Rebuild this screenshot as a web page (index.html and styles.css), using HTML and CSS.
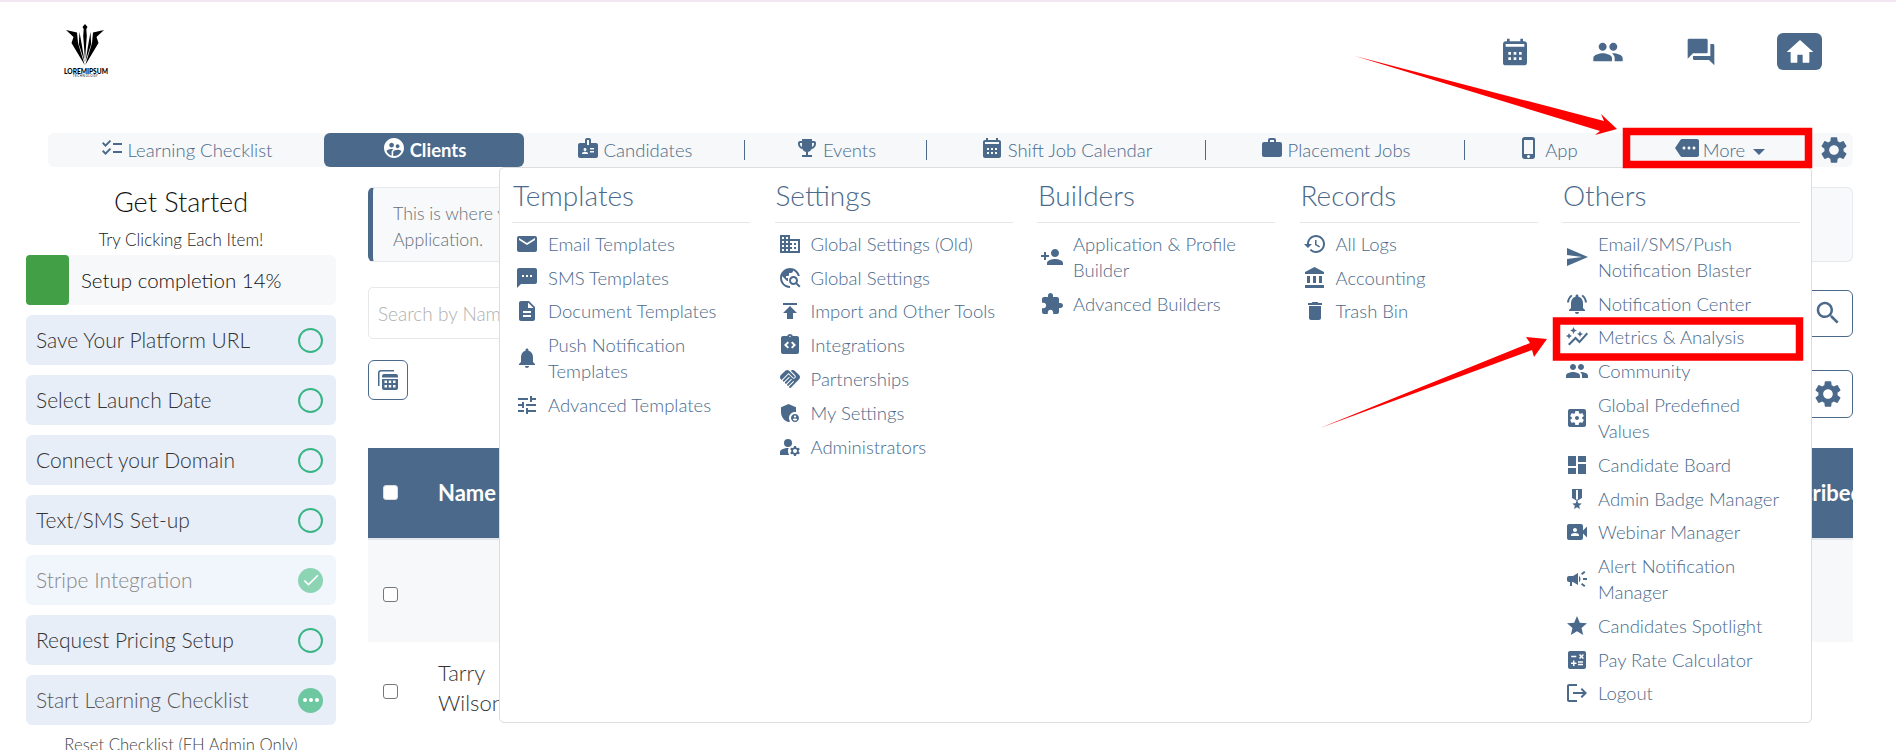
FILE: index.html
```html
<!DOCTYPE html>
<html lang="en">
<head>
  <meta charset="UTF-8" />
  <meta name="viewport" content="width=device-width, initial-scale=1.0"/>
  <title>Clients</title>
  <link rel="stylesheet" href="styles.css">
</head>
<body>
  <!-- icon sprite -->
  <svg class="sprite" xmlns="http://www.w3.org/2000/svg">
    <symbol id="i-checklist" viewBox="0 0 24 24"><path d="M22 7h-9v2h9V7zm0 8h-9v2h9v-2zM5.54 11 2 7.46l1.41-1.41 2.12 2.12 4.24-4.24 1.41 1.41L5.54 11zm0 8L2 15.46l1.41-1.41 2.12 2.12 4.24-4.24 1.41 1.41L5.54 19z"/></symbol>
    <symbol id="i-clients" viewBox="0 0 24 24"><path d="M11.99 2c-5.52 0-10 4.48-10 10s4.48 10 10 10 10-4.48 10-10-4.48-10-10-10zm3.61 6.34c1.07 0 1.93.86 1.93 1.93 0 1.07-.86 1.93-1.93 1.93-1.07 0-1.93-.86-1.93-1.93-.01-1.07.86-1.93 1.93-1.93zm-6-1.58c1.3 0 2.36 1.06 2.36 2.36 0 1.3-1.06 2.36-2.36 2.36s-2.36-1.06-2.36-2.36c0-1.31 1.05-2.36 2.36-2.36zm0 9.13v3.75c-2.4-.75-4.3-2.6-5.14-4.96 1.05-1.12 3.67-1.69 5.14-1.69.53 0 1.2.08 1.9.22-1.64.87-1.9 2.02-1.9 2.68zM11.99 20c-.27 0-.53-.01-.79-.04v-4.07c0-1.42 2.94-2.13 4.4-2.13 1.07 0 2.92.39 3.84 1.15-1.17 2.97-4.06 5.09-7.45 5.09z"/></symbol>
    <symbol id="i-badge" viewBox="0 0 24 24"><path d="M20 7h-5V4c0-1.1-.9-2-2-2h-2c-1.1 0-2 .9-2 2v3H4c-1.1 0-2 .9-2 2v11c0 1.1.9 2 2 2h16c1.1 0 2-.9 2-2V9c0-1.1-.9-2-2-2zM9 12c.83 0 1.5.67 1.5 1.5S9.83 15 9 15s-1.5-.67-1.5-1.5S8.17 12 9 12zm3 6H6v-.75c0-1 2-1.5 3-1.5s3 .5 3 1.5V18zm1-9h-2V4h2v5zm5 7.5h-4V15h4v1.5zm0-3h-4V12h4v1.5z"/></symbol>
    <symbol id="i-trophy" viewBox="0 0 24 24"><path d="M19 5h-2V3H7v2H5c-1.1 0-2 .9-2 2v1c0 2.55 1.92 4.63 4.39 4.94.63 1.5 1.98 2.63 3.61 2.96V19H7v2h10v-2h-4v-3.1c1.63-.33 2.98-1.46 3.61-2.96C19.08 12.63 21 10.55 21 8V7c0-1.1-.9-2-2-2zM5 8V7h2v3.82C5.84 10.4 5 9.3 5 8zm14 0c0 1.3-.84 2.4-2 2.82V7h2v1z"/></symbol>
    <symbol id="i-calendar" viewBox="0 0 24 24"><path d="M19 4h-1V2h-2v2H8V2H6v2H5c-1.11 0-1.99.9-1.99 2L3 20a2 2 0 0 0 2 2h14c1.1 0 2-.9 2-2V6c0-1.1-.9-2-2-2zM9 18H7v-2h2v2zm0-4H7v-2h2v2zm4 4h-2v-2h2v2zm0-4h-2v-2h2v2zm4 4h-2v-2h2v2zm0-4h-2v-2h2v2zm2-6H5V6h14v2z"/></symbol>
    <symbol id="i-work" viewBox="0 0 24 24"><path d="M20 6h-4V4c0-1.11-.89-2-2-2h-4c-1.11 0-2 .89-2 2v2H4c-1.11 0-1.99.89-1.99 2L2 19c0 1.11.89 2 2 2h16c1.11 0 2-.89 2-2V8c0-1.11-.89-2-2-2zm-6 0h-4V4h4v2z"/></symbol>
    <symbol id="i-phone" viewBox="0 0 24 24"><path d="M15.5 1h-8C6.12 1 5 2.12 5 3.5v17C5 21.88 6.12 23 7.5 23h8c1.38 0 2.5-1.12 2.5-2.5v-17C18 2.12 16.88 1 15.5 1zm-4 21c-.83 0-1.5-.67-1.5-1.5s.67-1.5 1.5-1.5 1.5.67 1.5 1.5-.67 1.5-1.5 1.5zm4.5-4H7V4h9v14z"/></symbol>
    <symbol id="i-more" viewBox="0 0 24 24"><path d="M22 3H7c-.69 0-1.23.35-1.59.88L0 12l5.41 8.11c.36.53.9.89 1.59.89h15c1.1 0 2-.9 2-2V5c0-1.1-.9-2-2-2zM9 13.5c-.83 0-1.5-.67-1.5-1.5s.67-1.5 1.5-1.5 1.5.67 1.5 1.5-.67 1.5-1.5 1.5zm5 0c-.83 0-1.5-.67-1.5-1.5s.67-1.5 1.5-1.5 1.5.67 1.5 1.5-.67 1.5-1.5 1.5zm5 0c-.83 0-1.5-.67-1.5-1.5s.67-1.5 1.5-1.5 1.5.67 1.5 1.5-.67 1.5-1.5 1.5z"/></symbol>
    <symbol id="i-gear" viewBox="0 0 24 24"><path d="M19.14 12.94c.04-.3.06-.61.06-.94 0-.32-.02-.64-.07-.94l2.03-1.58c.18-.14.23-.41.12-.61l-1.92-3.32c-.12-.22-.37-.29-.59-.22l-2.39.96c-.5-.38-1.03-.7-1.62-.94l-.36-2.54c-.04-.24-.24-.41-.48-.41h-3.84c-.24 0-.43.17-.47.41l-.36 2.54c-.59.24-1.13.57-1.62.94l-2.39-.96c-.22-.08-.47 0-.59.22L2.74 8.87c-.12.21-.08.47.12.61l2.03 1.58c-.05.3-.09.63-.09.94s.02.64.07.94l-2.03 1.58c-.18.14-.23.41-.12.61l1.92 3.32c.12.22.37.29.59.22l2.39-.96c.5.38 1.03.7 1.62.94l.36 2.54c.05.24.24.41.48.41h3.84c.24 0 .44-.17.47-.41l.36-2.54c.59-.24 1.13-.56 1.62-.94l2.39.96c.22.08.47 0 .59-.22l1.92-3.32c.12-.22.07-.47-.12-.61l-2.01-1.58zM12 15.6c-1.98 0-3.6-1.62-3.6-3.6s1.62-3.6 3.6-3.6 3.6 1.62 3.6 3.6-1.62 3.6-3.6 3.6z"/></symbol>
    <symbol id="i-people" viewBox="0 0 24 24"><path d="M16 11c1.66 0 2.99-1.34 2.99-3S17.66 5 16 5c-1.66 0-3 1.34-3 3s1.34 3 3 3zm-8 0c1.66 0 2.99-1.34 2.99-3S9.66 5 8 5C6.34 5 5 6.34 5 8s1.34 3 3 3zm0 2c-2.33 0-7 1.17-7 3.5V19h14v-2.5c0-2.33-4.67-3.5-7-3.5zm8 0c-.29 0-.62.02-.97.05 1.16.84 1.97 1.97 1.97 3.45V19h6v-2.5c0-2.33-4.67-3.5-7-3.5z"/></symbol>
    <symbol id="i-forum" viewBox="0 0 24 24"><path d="M21 6h-2v9H6v2c0 .55.45 1 1 1h11l4 4V7c0-.55-.45-1-1-1zm-4 6V3c0-.55-.45-1-1-1H3c-.55 0-1 .45-1 1v14l4-4h10c.55 0 1-.45 1-1z"/></symbol>
    <symbol id="i-home" viewBox="0 0 24 24"><path d="M10 20v-6h4v6h5v-8h3L12 3 2 12h3v8z"/></symbol>
    <symbol id="i-mail" viewBox="0 0 24 24"><path d="M20 4H4c-1.1 0-1.99.9-1.99 2L2 18c0 1.1.9 2 2 2h16c1.1 0 2-.9 2-2V6c0-1.1-.9-2-2-2zm0 4-8 5-8-5V6l8 5 8-5v2z"/></symbol>
    <symbol id="i-sms" viewBox="0 0 24 24"><path d="M20 2H4c-1.1 0-1.99.9-1.99 2L2 22l4-4h14c1.1 0 2-.9 2-2V4c0-1.1-.9-2-2-2zM9 11H7V9h2v2zm4 0h-2V9h2v2zm4 0h-2V9h2v2z"/></symbol>
    <symbol id="i-doc" viewBox="0 0 24 24"><path d="M14 2H6c-1.1 0-1.99.9-1.99 2L4 20c0 1.1.89 2 1.99 2H18c1.1 0 2-.9 2-2V8l-6-6zm2 16H8v-2h8v2zm0-4H8v-2h8v2zm-3-5V3.5L18.5 9H13z"/></symbol>
    <symbol id="i-bell" viewBox="0 0 24 24"><path d="M12 22c1.1 0 2-.9 2-2h-4c0 1.1.89 2 2 2zm6-6v-5c0-3.07-1.64-5.64-4.5-6.32V4c0-.83-.67-1.5-1.5-1.5s-1.5.67-1.5 1.5v.68C7.63 5.36 6 7.92 6 11v5l-2 2v1h16v-1l-2-2z"/></symbol>
    <symbol id="i-tune" viewBox="0 0 24 24"><path d="M3 17v2h6v-2H3zM3 5v2h10V5H3zm10 16v-2h8v-2h-8v-2h-2v6h2zM7 9v2H3v2h4v2h2V9H7zm14 4v-2H11v2h10zm-6-4h2V7h4V5h-4V3h-2v6z"/></symbol>
    <symbol id="i-domain" viewBox="0 0 24 24"><path d="M12 7V3H2v18h20V7H12zM6 19H4v-2h2v2zm0-4H4v-2h2v2zm0-4H4V9h2v2zm0-4H4V5h2v2zm4 12H8v-2h2v2zm0-4H8v-2h2v2zm0-4H8V9h2v2zm0-4H8V5h2v2zm10 12h-8v-2h2v-2h-2v-2h2v-2h-2V9h8v10zm-2-8h-2v2h2v-2zm0 4h-2v2h2v-2z"/></symbol>
    <symbol id="i-explore" viewBox="0 0 24 24"><path d="M19.3 16.9c.4-.7.7-1.5.7-2.4 0-2.5-2-4.5-4.5-4.5S11 12 11 14.5s2 4.5 4.5 4.5c.9 0 1.7-.3 2.4-.7l3.2 3.2 1.4-1.4-3.2-3.2zm-3.8.1c-1.4 0-2.5-1.1-2.5-2.5s1.1-2.5 2.5-2.5 2.5 1.1 2.5 2.5-1.1 2.5-2.5 2.5zM12 20v2C6.48 22 2 17.52 2 12S6.48 2 12 2c4.84 0 8.87 3.44 9.8 8h-2.07c-.64-2.46-2.4-4.47-4.73-5.41V5c0 1.1-.9 2-2 2h-2v2c0 .55-.45 1-1 1H8v2h2v3H9l-4.79-4.79C4.08 10.79 4 11.38 4 12c0 4.41 3.59 8 8 8z"/></symbol>
    <symbol id="i-publish" viewBox="0 0 24 24"><path d="M5 4v2h14V4H5zm0 10h4v6h6v-6h4l-7-7-7 7z"/></symbol>
    <symbol id="i-code" viewBox="0 0 24 24"><path d="M19 3h-4.18C14.4 1.84 13.3 1 12 1s-2.4.84-2.82 2H5c-1.1 0-2 .9-2 2v14c0 1.1.9 2 2 2h14c1.1 0 2-.9 2-2V5c0-1.1-.9-2-2-2zm-7-.25c.41 0 .75.34.75.75s-.34.75-.75.75-.75-.34-.75-.75.34-.75.75-.75zM11 14.17l-1.41 1.42L6 12l3.59-3.59L11 9.83 8.83 12 11 14.17zm3.41 1.42L13 14.17 15.17 12 13 9.83l1.41-1.42L18 12l-3.59 3.59z"/></symbol>
    <symbol id="i-handshake" viewBox="0 0 24 24"><path d="M16.48 10.41c-.39.39-1.04.39-1.43 0l-4.47-4.46-7.05 7.04-.66-.63c-1.17-1.17-1.17-3.07 0-4.24l4.24-4.24c1.17-1.17 3.07-1.17 4.24 0L16.48 9c.39.39.39 1.02 0 1.41zm.7-2.12c.78.78.78 2.05 0 2.83-1.27 1.27-2.61.22-2.83 0l-3.76-3.76-5.57 5.57c-.39.39-.39 1.02 0 1.41.39.39 1.02.39 1.42 0l4.62-4.62.71.71-4.62 4.62c-.39.39-.39 1.02 0 1.41.39.39 1.02.39 1.42 0l4.62-4.62.71.71-4.62 4.62c-.39.39-.39 1.02 0 1.41.39.39 1.02.39 1.41 0l4.62-4.62.71.71-4.62 4.62c-.39.39-.39 1.02 0 1.41.39.39 1.02.39 1.41 0l8.32-8.34c1.17-1.17 1.17-3.07 0-4.24l-4.24-4.24c-1.15-1.15-3.01-1.17-4.18-.06l4.48 4.47z"/></symbol>
    <symbol id="i-shield" viewBox="0 0 24 24"><path d="M17 11c.34 0 .67.04 1 .09V6.27L10.5 3 3 6.27v4.91c0 4.54 3.2 8.79 7.5 9.82.55-.13 1.08-.32 1.6-.55-.69-.98-1.1-2.17-1.1-3.45 0-3.31 2.69-6 6-6z"/><path d="M17 13c-2.21 0-4 1.79-4 4s1.79 4 4 4 4-1.79 4-4-1.79-4-4-4zm0 1.38c.62 0 1.12.51 1.12 1.12s-.51 1.12-1.12 1.12-1.12-.51-1.12-1.12.5-1.12 1.12-1.12zm0 5.37c-.93 0-1.74-.46-2.24-1.17.05-.72 1.51-1.08 2.24-1.08s2.19.36 2.24 1.08c-.5.71-1.31 1.17-2.24 1.17z"/></symbol>
    <symbol id="i-admin" viewBox="0 0 24 24"><circle cx="10" cy="8" r="4"/><path d="M10.67 13.02C10.45 13.01 10.23 13 10 13c-2.42 0-4.68.67-6.61 1.82-.88.52-1.39 1.5-1.39 2.53V20h9.26c-.79-1.13-1.26-2.51-1.26-4 0-1.07.25-2.07.67-2.98z"/><path d="M20.75 16c0-.22-.03-.42-.06-.63l1.14-1.01-1-1.73-1.45.49c-.32-.27-.68-.48-1.08-.63L18 11h-2l-.3 1.49c-.4.15-.76.36-1.08.63l-1.45-.49-1 1.73 1.14 1.01c-.03.21-.06.41-.06.63s.03.42.06.63l-1.14 1.01 1 1.73 1.45-.49c.32.27.68.48 1.08.63L16 21h2l.3-1.49c.4-.15.76-.36 1.08-.63l1.45.49 1-1.73-1.14-1.01c.03-.21.06-.41.06-.63zM17 18c-1.1 0-2-.9-2-2s.9-2 2-2 2 .9 2 2-.9 2-2 2z"/></symbol>
    <symbol id="i-person-add" viewBox="0 0 24 24"><path d="M15 12c2.21 0 4-1.79 4-4s-1.79-4-4-4-4 1.79-4 4 1.79 4 4 4zm-9-2V7H4v3H1v2h3v3h2v-3h3v-2H6zm9 4c-2.67 0-8 1.34-8 4v2h16v-2c0-2.66-5.33-4-8-4z"/></symbol>
    <symbol id="i-puzzle" viewBox="0 0 24 24"><path d="M20.5 11H19V7c0-1.1-.9-2-2-2h-4V3.5C13 2.12 11.88 1 10.5 1S8 2.12 8 3.5V5H4c-1.1 0-1.99.9-1.99 2v3.8H3.5c1.49 0 2.7 1.21 2.7 2.7s-1.21 2.7-2.7 2.7H2V20c0 1.1.9 2 2 2h3.8v-1.5c0-1.49 1.21-2.7 2.7-2.7 1.49 0 2.7 1.21 2.7 2.7V22H17c1.1 0 2-.9 2-2v-4h1.5c1.38 0 2.5-1.12 2.5-2.5S21.88 11 20.5 11z"/></symbol>
    <symbol id="i-history" viewBox="0 0 24 24"><path d="M13 3c-4.97 0-9 4.03-9 9H1l3.89 3.89.07.14L9 12H6c0-3.87 3.13-7 7-7s7 3.13 7 7-3.13 7-7 7c-1.93 0-3.68-.79-4.94-2.06l-1.42 1.42C8.27 19.99 10.51 21 13 21c4.97 0 9-4.03 9-9s-4.03-9-9-9zm-1 5v5l4.28 2.54.72-1.21-3.5-2.08V8H12z"/></symbol>
    <symbol id="i-bank" viewBox="0 0 24 24"><path d="M4 10v7h3v-7H4zm6 0v7h3v-7h-3zM2 22h19v-3H2v3zm14-12v7h3v-7h-3zm-4.5-9L2 6v2h19V6l-9.5-5z"/></symbol>
    <symbol id="i-trash" viewBox="0 0 24 24"><path d="M6 19c0 1.1.9 2 2 2h8c1.1 0 2-.9 2-2V7H6v12zM19 4h-3.5l-1-1h-5l-1 1H5v2h14V4z"/></symbol>
    <symbol id="i-send" viewBox="0 0 24 24"><path d="M2.01 21 23 12 2.01 3 2 10l15 2-15 2z"/></symbol>
    <symbol id="i-bell-active" viewBox="0 0 24 24"><path d="M7.58 4.08 6.15 2.65C3.75 4.48 2.17 7.3 2.03 10.5h2c.15-2.65 1.51-4.97 3.55-6.42zm12.39 6.42h2c-.15-3.2-1.73-6.02-4.12-7.85l-1.42 1.43c2.02 1.45 3.39 3.77 3.54 6.42zM18 11c0-3.07-1.64-5.64-4.5-6.32V4c0-.83-.67-1.5-1.5-1.5s-1.5.67-1.5 1.5v.68C7.63 5.36 6 7.92 6 11v5l-2 2v1h16v-1l-2-2v-5zm-6 11c.14 0 .27-.01.4-.04.65-.14 1.18-.58 1.44-1.18.1-.24.15-.5.15-.78h-4c.01 1.1.9 2 2.01 2z"/></symbol>
    <symbol id="i-graph" viewBox="0 0 24 24"><path d="M14.06 9.94 12 9l2.06-.94L15 6l.94 2.06L18 9l-2.06.94L15 12l-.94-2.06zM4 14l.94-2.06L7 11l-2.06-.94L4 8l-.94 2.06L1 11l2.06.94L4 14zm4.5-5 1.09-2.41L12 5.5 9.59 4.41 8.5 2 7.41 4.41 5 5.5l2.41 1.09L8.5 9zm-4 11.5 6-6.01 4 4L23 8.93l-1.41-1.41-7.09 7.97-4-4L3 19l1.5 1.5z"/></symbol>
    <symbol id="i-values" viewBox="0 0 24 24"><path d="M12 10c-1.1 0-2 .9-2 2s.9 2 2 2 2-.9 2-2-.9-2-2-2zm7-7H5c-1.11 0-2 .9-2 2v14c0 1.1.89 2 2 2h14c1.11 0 2-.9 2-2V5c0-1.1-.89-2-2-2zm-1.75 9c0 .23-.02.46-.05.68l1.48 1.16c.13.11.17.3.08.45l-1.4 2.42c-.09.15-.27.21-.43.15l-1.74-.7c-.36.28-.76.51-1.18.69l-.26 1.85c-.03.17-.18.3-.35.3h-2.8c-.17 0-.32-.13-.35-.29l-.26-1.85c-.43-.18-.82-.41-1.18-.69l-1.74.7c-.16.06-.34 0-.43-.15l-1.4-2.42c-.09-.15-.05-.34.08-.45l1.48-1.16c-.03-.23-.05-.46-.05-.69 0-.23.02-.46.05-.68l-1.48-1.16c-.13-.11-.17-.3-.08-.45l1.4-2.42c.09-.15.27-.21.43-.15l1.74.7c.36-.28.76-.51 1.18-.69l.26-1.85c.03-.17.18-.3.35-.3h2.8c.17 0 .32.13.35.29l.26 1.85c.43.18.82.41 1.18.69l1.74-.7c.16-.06.34 0 .43.15l1.4 2.42c.09.15.05.34-.08.45l-1.48 1.16c.03.23.05.46.05.69z"/></symbol>
    <symbol id="i-dashboard" viewBox="0 0 24 24"><path d="M3 13h8V3H3v10zm0 8h8v-6H3v6zm10 0h8V11h-8v10zm0-18v6h8V3h-8z"/></symbol>
    <symbol id="i-medal" viewBox="0 0 24 24"><path d="M17 10.43V2H7v8.43c0 .35.18.68.49.86l4.18 2.51-.99 2.34-3.41.29 2.59 2.24L9.07 22 12 20.23 14.93 22l-.78-3.33 2.59-2.24-3.41-.29-.99-2.34 4.18-2.51c.3-.18.48-.5.48-.86zm-4 1.8-1 .6-1-.6V3h2v9.23z"/></symbol>
    <symbol id="i-video" viewBox="0 0 24 24"><path d="M18 10.48V6c0-1.1-.9-2-2-2H4c-1.1 0-2 .9-2 2v12c0 1.1.9 2 2 2h12c1.1 0 2-.9 2-2v-4.48l4 3.98v-11l-4 3.98zM10 8c1.1 0 2 .9 2 2s-.9 2-2 2-2-.9-2-2 .9-2 2-2zm4 8H6v-.57c0-.81.48-1.53 1.22-1.85.85-.37 1.79-.58 2.78-.58.99 0 1.93.21 2.78.58.74.32 1.22 1.04 1.22 1.85V16z"/></symbol>
    <symbol id="i-campaign" viewBox="0 0 24 24"><path d="M18 11v2h4v-2h-4zm-2 6.61c.96.71 2.21 1.65 3.2 2.39.4-.53.8-1.07 1.2-1.6-.99-.74-2.24-1.68-3.2-2.4-.4.54-.8 1.08-1.2 1.61zM20.4 5.6c-.4-.53-.8-1.07-1.2-1.6-.99.74-2.24 1.68-3.2 2.4.4.53.8 1.07 1.2 1.6.96-.72 2.21-1.65 3.2-2.4zM4 9c-1.1 0-2 .9-2 2v2c0 1.1.9 2 2 2h1v4h2v-4h1l5 3V6L8 9H4zm11.5 3c0-1.33-.58-2.53-1.5-3.35v6.69c.92-.81 1.5-2.01 1.5-3.34z"/></symbol>
    <symbol id="i-star" viewBox="0 0 24 24"><path d="M12 17.27 18.18 21l-1.64-7.03L22 9.24l-7.19-.61L12 2 9.19 8.63 2 9.24l5.46 4.73L5.82 21z"/></symbol>
    <symbol id="i-calc" viewBox="0 0 24 24"><path d="M19 3H5c-1.1 0-2 .9-2 2v14c0 1.1.9 2 2 2h14c1.1 0 2-.9 2-2V5c0-1.1-.9-2-2-2zm-5.03 4.06 1.06-1.06 1.41 1.41L17.85 6l1.06 1.06-1.41 1.41 1.41 1.41-1.06 1.06-1.41-1.41-1.41 1.41-1.06-1.06 1.41-1.41-1.41-1.41zM6.25 7.72h5v1.5h-5v-1.5zM11.5 16h-2v2H8v-2H6v-1.5h2v-2h1.5v2h2V16zm6.5 1.25h-5v-1.5h5v1.5zm0-2.5h-5v-1.5h5v1.5z"/></symbol>
    <symbol id="i-logout" viewBox="0 0 24 24"><path d="M17 7l-1.41 1.41L18.17 11H8v2h10.17l-2.58 2.58L17 17l5-5zM4 5h8V3H4c-1.1 0-2 .9-2 2v14c0 1.1.9 2 2 2h8v-2H4V5z"/></symbol>
    <symbol id="i-search" viewBox="0 0 24 24"><path d="M15.5 14h-.79l-.28-.27C15.41 12.59 16 11.11 16 9.5 16 5.91 13.09 3 9.5 3S3 5.91 3 9.5 5.91 16 9.5 16c1.61 0 3.09-.59 4.23-1.57l.27.28v.79l5 4.99L20.49 19l-4.99-5zm-6 0C7.01 14 5 11.99 5 9.5S7.01 5 9.5 5 14 7.01 14 9.5 11.99 14 9.5 14z"/></symbol>
    <symbol id="i-calc-stack" viewBox="0 0 24 24"><path d="M5 2a3 3 0 0 0-3 3v13h1.5V5A1.5 1.5 0 0 1 5 3.5h13V2H5z"/><path fill-rule="evenodd" d="M8 6h12a2 2 0 0 1 2 2v1.5H6V8a2 2 0 0 1 2-2zM6 11h16v9a2 2 0 0 1-2 2H8a2 2 0 0 1-2-2v-9zm2.5 1.5V15H11v-2.5H8.500zm4.25 0V15h2.5v-2.5h-2.5zm4.25 0V15h2.5v-2.5H17zm-8.500 4.500v2.500H11V17H8.500zm4.250 0v2.500h2.500V17h-2.500zm4.250 0v2.500h2.500V17H17z"/></symbol>
    <symbol id="i-check" viewBox="0 0 24 24"><path d="M9 16.2 4.8 12l-1.4 1.4L9 19 21 7l-1.4-1.4z"/></symbol>
  </svg>

  <div class="page">
    <header class="topbar">
      <div class="logo">
        <svg class="logo-mark" viewBox="64 24 43 41">
          <polygon points="66,30 77,32.5 78,43 84.7,65 71.5,43 73.5,37"/>
          <polygon points="104,30 93,32.5 92,43 85.3,65 98.5,43 96.5,37"/>
          <polygon points="79.5,32 82,46 84.6,62 78.8,44"/>
          <polygon points="90.5,32 88,46 85.4,62 91.2,44"/>
          <polygon points="85,24 87.5,27 86.3,29 86.8,36 85,60 83.2,36 83.7,29 82.5,27"/>
        </svg>
        <div class="logo-name">LOREMIPSUM</div>
        <div class="logo-sub">TECHNOLOGY</div>
      </div>
      <div class="top-actions">
        <a class="top-btn"><svg class="icon"><use href="#i-calendar"/></svg></a>
        <a class="top-btn"><svg class="icon"><use href="#i-people"/></svg></a>
        <a class="top-btn"><svg class="icon"><use href="#i-forum"/></svg></a>
        <a class="top-btn home"><svg class="icon"><use href="#i-home"/></svg></a>
      </div>
    </header>

    <nav class="nav">
      <a class="nav-item"><svg class="icon"><use href="#i-checklist"/></svg>Learning Checklist</a>
      <a class="nav-item active"><svg class="icon"><use href="#i-clients"/></svg>Clients</a>
      <a class="nav-item sep"><svg class="icon"><use href="#i-badge"/></svg>Candidates</a>
      <a class="nav-item sep"><svg class="icon"><use href="#i-trophy"/></svg>Events</a>
      <a class="nav-item sep"><svg class="icon"><use href="#i-calendar"/></svg>Shift Job Calendar</a>
      <a class="nav-item sep"><svg class="icon"><use href="#i-work"/></svg>Placement Jobs</a>
      <a class="nav-item"><svg class="icon"><use href="#i-phone"/></svg>App</a>
      <a class="nav-item"><svg class="icon"><use href="#i-more"/></svg>More<span class="caret"></span></a>
      <a class="nav-item nav-gear"><svg class="icon"><use href="#i-gear"/></svg></a>
    </nav>

    <div class="content">
      <aside class="sidebar">
        <h2>Get Started</h2>
        <p class="hint">Try Clicking Each Item!</p>
        <div class="progress"><span class="progress-fill"></span>Setup completion 14%</div>
        <div class="step">Save Your Platform URL<span class="ring"></span></div>
        <div class="step">Select Launch Date<span class="ring"></span></div>
        <div class="step">Connect your Domain<span class="ring"></span></div>
        <div class="step">Text/SMS Set-up<span class="ring"></span></div>
        <div class="step done">Stripe Integration<span class="ring filled"><svg class="icon"><use href="#i-check"/></svg></span></div>
        <div class="step">Request Pricing Setup<span class="ring"></span></div>
        <div class="step pending">Start Learning Checklist<span class="ring filled dots"><i></i><i></i><i></i></span></div>
        <p class="reset">Reset Checklist (FH Admin Only)</p>
      </aside>

      <main class="main">
        <div class="alert">This is where you can view and manage all of the clients that have signed up through your<br>Application.</div>

        <div class="search-row">
          <input class="search" type="text" placeholder="Search by Name">
          <button class="square-btn search-btn"><svg class="icon"><use href="#i-search"/></svg></button>
        </div>

        <div class="tool-row">
          <button class="square-btn calc-btn"><svg class="icon"><use href="#i-calc-stack"/></svg></button>
          <button class="square-btn gear-btn"><svg class="icon"><use href="#i-gear"/></svg></button>
        </div>

        <div class="table">
          <div class="row head">
            <input type="checkbox" class="check">
            <span class="cell-name">Name</span>
            <span class="cell-end">Subscribed</span>
          </div>
          <div class="row shaded"><input type="checkbox" class="check"></div>
          <div class="row last"><input type="checkbox" class="check"><span class="cell-name">Tarry<br>Wilson</span></div>
        </div>
      </main>
    </div>

    <!-- More dropdown, open over the page -->
    <div class="dropdown">
      <section class="menu-col">
        <h3>Templates</h3>
        <a class="menu-item"><svg class="icon"><use href="#i-mail"/></svg><span>Email Templates</span></a>
        <a class="menu-item"><svg class="icon"><use href="#i-sms"/></svg><span>SMS Templates</span></a>
        <a class="menu-item"><svg class="icon"><use href="#i-doc"/></svg><span>Document Templates</span></a>
        <a class="menu-item"><svg class="icon"><use href="#i-bell"/></svg><span>Push Notification<br>Templates</span></a>
        <a class="menu-item"><svg class="icon"><use href="#i-tune"/></svg><span>Advanced Templates</span></a>
      </section>
      <section class="menu-col">
        <h3>Settings</h3>
        <a class="menu-item"><svg class="icon"><use href="#i-domain"/></svg><span>Global Settings (Old)</span></a>
        <a class="menu-item"><svg class="icon"><use href="#i-explore"/></svg><span>Global Settings</span></a>
        <a class="menu-item"><svg class="icon"><use href="#i-publish"/></svg><span>Import and Other Tools</span></a>
        <a class="menu-item"><svg class="icon"><use href="#i-code"/></svg><span>Integrations</span></a>
        <a class="menu-item"><svg class="icon"><use href="#i-handshake"/></svg><span>Partnerships</span></a>
        <a class="menu-item"><svg class="icon"><use href="#i-shield"/></svg><span>My Settings</span></a>
        <a class="menu-item"><svg class="icon"><use href="#i-admin"/></svg><span>Administrators</span></a>
      </section>
      <section class="menu-col">
        <h3>Builders</h3>
        <a class="menu-item"><svg class="icon"><use href="#i-person-add"/></svg><span>Application &amp; Profile<br>Builder</span></a>
        <a class="menu-item"><svg class="icon"><use href="#i-puzzle"/></svg><span>Advanced Builders</span></a>
      </section>
      <section class="menu-col">
        <h3>Records</h3>
        <a class="menu-item"><svg class="icon"><use href="#i-history"/></svg><span>All Logs</span></a>
        <a class="menu-item"><svg class="icon"><use href="#i-bank"/></svg><span>Accounting</span></a>
        <a class="menu-item"><svg class="icon"><use href="#i-trash"/></svg><span>Trash Bin</span></a>
      </section>
      <section class="menu-col">
        <h3>Others</h3>
        <a class="menu-item"><svg class="icon"><use href="#i-send"/></svg><span>Email/SMS/Push<br>Notification Blaster</span></a>
        <a class="menu-item"><svg class="icon"><use href="#i-bell-active"/></svg><span>Notification Center</span></a>
        <a class="menu-item"><svg class="icon"><use href="#i-graph"/></svg><span>Metrics &amp; Analysis</span></a>
        <a class="menu-item"><svg class="icon"><use href="#i-people"/></svg><span>Community</span></a>
        <a class="menu-item"><svg class="icon"><use href="#i-values"/></svg><span>Global Predefined<br>Values</span></a>
        <a class="menu-item"><svg class="icon"><use href="#i-dashboard"/></svg><span>Candidate Board</span></a>
        <a class="menu-item"><svg class="icon"><use href="#i-medal"/></svg><span>Admin Badge Manager</span></a>
        <a class="menu-item"><svg class="icon"><use href="#i-video"/></svg><span>Webinar Manager</span></a>
        <a class="menu-item"><svg class="icon"><use href="#i-campaign"/></svg><span>Alert Notification<br>Manager</span></a>
        <a class="menu-item"><svg class="icon"><use href="#i-star"/></svg><span>Candidates Spotlight</span></a>
        <a class="menu-item"><svg class="icon"><use href="#i-calc"/></svg><span>Pay Rate Calculator</span></a>
        <a class="menu-item"><svg class="icon"><use href="#i-logout"/></svg><span>Logout</span></a>
      </section>
    </div>

    <!-- red annotations drawn on the screenshot -->
    <svg class="marks" viewBox="0 0 1896 750">
      <rect x="1626.5" y="131.5" width="182" height="33"/>
      <rect x="1556.5" y="321" width="243" height="36"/>
      <polygon points="1355,56 1604,121 1601,114 1617,129 1595,135 1600,131"/>
      <polygon points="1320,428 1530,343 1526,337 1547,339 1534,357 1532,350"/>
    </svg>
  </div>
</body>
</html>
```

FILE: styles.css
```css
* {
  box-sizing: border-box;
}

html, body {
  height: 100%;
}

body {
  margin: 0;
  font-family: "Lato", "Open Sans", sans-serif;
  font-weight: 300;
  color: #333;
  background: #fff;
  overflow: hidden;
}

.sprite {
  display: none;
}

.icon {
  width: 24px;
  height: 24px;
  fill: currentColor;
  flex: none;
}

.page {
  position: relative;
  width: 1896px;
  height: 750px;
  overflow: hidden;
  border-top: 2px solid #f1e6f1;
}

/* top bar */
.topbar {
  display: flex;
  justify-content: space-between;
  height: 131px;
  padding: 0 74px 0 64px;
}

.logo {
  width: 43px;
  margin-top: 22px;
  color: #000;
  text-align: center;
}

.logo-mark {
  display: block;
  width: 43px;
  height: 41px;
}

.logo-name {
  margin-top: 2px;
  font-size: 6.6px;
  line-height: 8px;
  font-weight: 900;
  white-space: nowrap;
}

.logo-sub {
  font-size: 3px;
  line-height: 3px;
  font-weight: 400;
  letter-spacing: 0.5px;
  white-space: nowrap;
}

.top-actions {
  display: flex;
  gap: 48px;
  margin-top: 31px;
  color: #4b6a8b;
}

.top-btn {
  display: flex;
  align-items: center;
  justify-content: center;
  width: 45px;
  height: 37px;
  border-radius: 6px;
}

.top-btn .icon {
  width: 32px;
  height: 32px;
}

.top-btn.home {
  margin-left: 6px;
  background: #4b6a8b;
  color: #fff;
}

/* nav */
.nav {
  display: grid;
  grid-template-columns: 276px 200px 221px 182px 279px 259px 165px 180px 43px;
  align-items: center;
  height: 34px;
  margin: 0 43px 0 48px;
  background: #f6f8fa;
  border-radius: 6px;
  color: #4b6a8b;
  font-size: 18.5px;
}

.nav-item {
  display: flex;
  align-items: center;
  justify-content: center;
  gap: 4px;
  height: 34px;
  border-radius: 6px;
}

.nav-item .icon {
  margin-bottom: 5px;
}

.nav-item.sep {
  height: 20px;
  border-right: 1px solid #4b6a8b;
  border-radius: 0;
}

.nav-item.active {
  background: #4b6a8b;
  color: #fff;
  font-weight: 700;
}

.nav-gear {
  padding-left: 5px;
}

.nav-gear .icon {
  width: 32px;
  height: 32px;
  margin: 0;
}

.caret {
  width: 0;
  height: 0;
  margin: 3px 0 0 4px;
  border-left: 6px solid transparent;
  border-right: 6px solid transparent;
  border-top: 6px solid #4b6a8b;
}

/* page body */
.content {
  display: flex;
  gap: 32px;
  padding: 20px 43px 0 26px;
}

.sidebar {
  flex: none;
  width: 310px;
}

.sidebar h2 {
  margin: 0;
  font-size: 27px;
  line-height: 30px;
  font-weight: 300;
  text-align: center;
  color: #111;
}

.hint {
  margin: 11px 0 3px;
  font-size: 17px;
  line-height: 24px;
  text-align: center;
  color: #222;
}

.progress {
  display: flex;
  align-items: center;
  gap: 12px;
  height: 50px;
  margin-bottom: 10px;
  background: #f7f8fa;
  border-radius: 6px;
  font-size: 20.5px;
  color: #111;
}

.progress-fill {
  width: 43px;
  height: 50px;
  background: #439f45;
  border-radius: 4px;
}

.step {
  display: flex;
  align-items: center;
  justify-content: space-between;
  height: 50px;
  margin-bottom: 10px;
  padding: 0 13px 2px 10px;
  background: #e8eef8;
  border-radius: 6px;
  font-size: 21px;
  color: #333;
}

.step.done {
  background: #f1f5fc;
  color: #888;
}

.step.pending {
  color: #555;
}

.ring {
  display: flex;
  align-items: center;
  justify-content: center;
  gap: 2px;
  width: 25px;
  height: 25px;
  margin-top: 2px;
  border: 2.5px solid #38b584;
  border-radius: 50%;
}

.ring.filled {
  border: none;
  color: #fff;
  background: #8dd4b5;
}

.ring.filled .icon {
  width: 20px;
  height: 20px;
}

.ring.dots {
  background: #6dc7a1;
}

.ring.dots i {
  width: 4px;
  height: 4px;
  background: #fff;
  border-radius: 50%;
}

.reset {
  margin: 5px 0 0;
  font-size: 16.7px;
  line-height: 20px;
  text-align: center;
  color: #444;
  white-space: nowrap;
}

.main {
  flex: 1;
  min-width: 0;
}

.alert {
  height: 75px;
  padding: 12px 20px;
  background: #f7f9fb;
  border: 1px solid #e6e9ee;
  border-left: 5px solid #4b6a8b;
  border-radius: 6px;
  font-size: 17.8px;
  line-height: 26px;
  color: #666f78;
}

.search-row {
  display: flex;
  align-items: center;
  margin-top: 25px;
}

.search {
  flex: 1;
  height: 52px;
  padding: 0 9px;
  border: 1px solid #e6e8ea;
  border-radius: 5px;
  font: inherit;
  font-size: 19px;
}

.search::placeholder {
  color: #b0b0b0;
}

.square-btn {
  display: flex;
  align-items: center;
  justify-content: center;
  padding: 0;
  background: #fff;
  border: 1px solid #4b6a8b;
  border-radius: 6px;
  color: #4b6a8b;
}

.search-btn {
  width: 50px;
  height: 47px;
  margin-left: 4px;
}

.search-btn .icon {
  width: 30px;
  height: 30px;
}

.tool-row {
  display: flex;
  justify-content: space-between;
  align-items: flex-start;
  margin-top: 21px;
}

.calc-btn {
  width: 40px;
  height: 40px;
}

.gear-btn {
  width: 50px;
  height: 48px;
  margin-top: 10px;
}

.gear-btn .icon {
  width: 32px;
  height: 32px;
}

/* table */
.table {
  margin-top: 30px;
  overflow: hidden;
}

.row {
  display: flex;
  align-items: center;
  gap: 40px;
  padding-left: 15px;
  min-height: 104px;
  font-size: 22px;
  line-height: 30px;
  color: #333;
}

.row.head {
  min-height: 90px;
  background: #4b6a8b;
  color: #fff;
  font-weight: 700;
}

.row.shaded {
  background: #f7f8fa;
  border-top: 2px solid #e3e6ea;
}

.row.last {
  min-height: 92px;
}

.check {
  appearance: none;
  width: 15px;
  height: 15px;
  margin: 6px 0 0;
  background: #fff;
  border: 1.5px solid #777;
  border-radius: 3px;
}

.head .check {
  margin-top: -2px;
  border-color: #ddd;
}

.cell-end {
  margin-left: auto;
  margin-right: -10px;
}

/* more dropdown */
.dropdown {
  position: absolute;
  left: 499px;
  top: 165px;
  display: grid;
  grid-template-columns: repeat(5, 238px);
  column-gap: 24.5px;
  width: 1313px;
  height: 556px;
  padding: 10px 12px 0;
  background: #fff;
  border: 1px solid #ddd;
  border-radius: 5px;
  color: #4b6a8b;
}

.menu-col h3 {
  margin: 0 0 4px;
  padding: 0 0 10px 1px;
  border-bottom: 1px solid #e4e6ea;
  font-size: 28px;
  line-height: 34px;
  font-weight: 300;
}

.menu-item {
  display: flex;
  align-items: center;
  gap: 9px;
  padding: 3.9px 0 3.9px 3px;
  font-size: 18.5px;
  line-height: 26px;
}

/* annotations */
.marks {
  position: absolute;
  left: 0;
  top: -2px;
  width: 1896px;
  height: 750px;
  pointer-events: none;
}

.marks rect {
  fill: none;
  stroke: #f00;
  stroke-width: 7.5;
}

.marks polygon {
  fill: #f00;
}
```
